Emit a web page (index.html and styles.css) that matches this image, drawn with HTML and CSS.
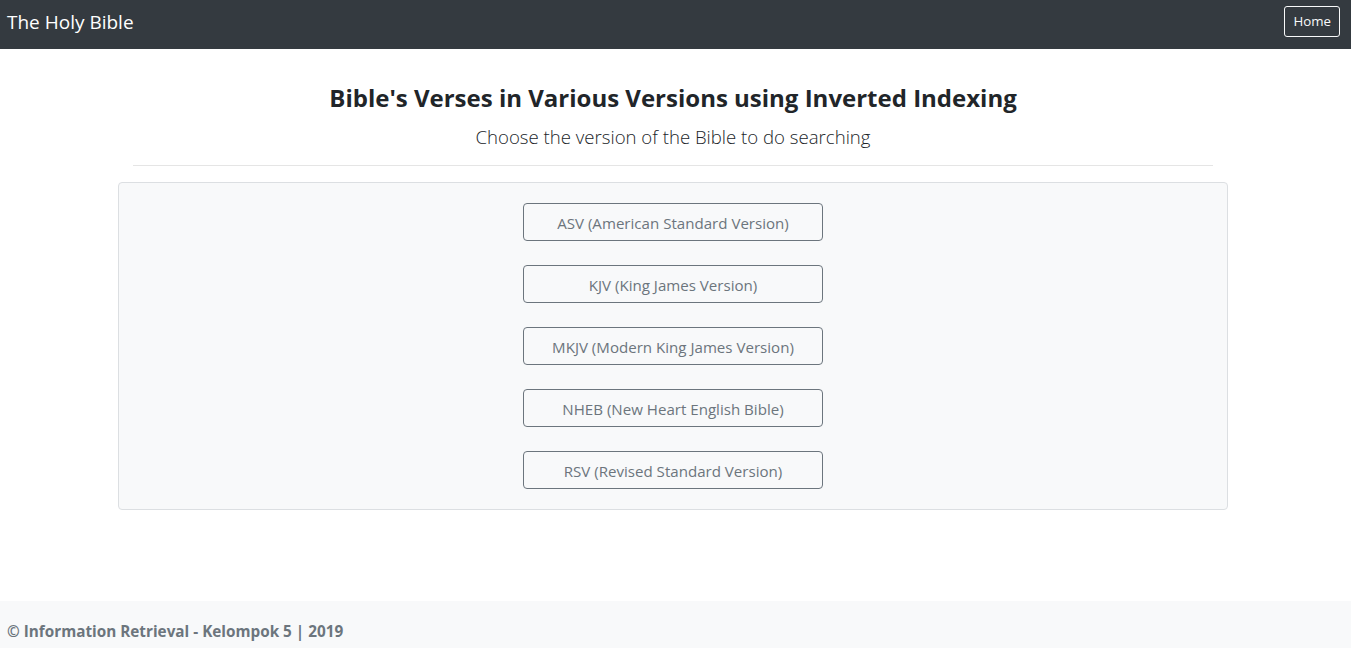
FILE: index.html
```html
<!DOCTYPE html>
<html lang="en">
<head>
<meta charset="utf-8">
<title>The Holy Bible</title>
<link rel="stylesheet" href="styles.css">
</head>
<body>
<nav class="navbar">
  <a class="brand" href="#">The Holy Bible</a>
  <a class="btn-home" href="#">Home</a>
</nav>
<main class="main">
  <div class="container">
    <h3 class="title">Bible's Verses in Various Versions using Inverted Indexing</h3>
    <p class="lead">Choose the version of the Bible to do searching</p>
    <hr class="divider">
    <div class="card">
      <a class="btn-version" href="#">ASV (American Standard Version)</a>
      <a class="btn-version" href="#">KJV (King James Version)</a>
      <a class="btn-version" href="#">MKJV (Modern King James Version)</a>
      <a class="btn-version" href="#">NHEB (New Heart English Bible)</a>
      <a class="btn-version" href="#">RSV (Revised Standard Version)</a>
    </div>
  </div>
</main>
<footer class="footer">
  <span class="footer-text">© Information Retrieval - Kelompok 5 | 2019</span>
</footer>
</body>
</html>
```

FILE: styles.css
```css
* { box-sizing: border-box; }
html, body { margin: 0; padding: 0; }
body {
  height: 648px;
  overflow: hidden;
  display: flex;
  flex-direction: column;
  font-family: "Open Sans", "Noto Sans", sans-serif;
  color: #212529;
  background: #fff;
  font-size: 16px;
}
.navbar {
  height: 49px;
  background: #343a40;
  display: flex;
  align-items: center;
  justify-content: space-between;
  padding: 6px 11px 12px 7px;
  flex-shrink: 0;
}
.brand {
  color: #fff;
  text-decoration: none;
  font-size: 19px;
  line-height: 30px;
  padding-top: 1px;
}
.btn-home {
  color: #f8f9fa;
  text-decoration: none;
  font-size: 13.3px;
  line-height: 21px;
  padding: 4px 8px;
  border: 1px solid #f8f9fa;
  border-radius: 3px;
}
.main {
  padding-top: 34px;
  padding-right: 5px;
}
.container {
  width: 1110px;
  margin: 0 auto;
  display: flex;
  flex-direction: column;
  align-items: center;
}
.title {
  margin: 0 0 8px;
  font-size: 24px;
  line-height: 29px;
  font-weight: 700;
  text-align: center;
}
.lead {
  margin: 2px 0 0;
  font-size: 18.6px;
  line-height: 30px;
  font-weight: 300;
  text-align: center;
}
.divider {
  width: 1080px;
  margin: 13px 0 16px;
  border: 0;
  border-top: 1px solid #e5e5e5;
}
.card {
  width: 1110px;
  background: #f8f9fa;
  border: 1px solid #dcdfe2;
  border-radius: 4px;
  padding: 20px 0;
  display: flex;
  flex-direction: column;
  align-items: center;
  gap: 24px;
}
.btn-version {
  width: 300px;
  height: 38px;
  display: flex;
  align-items: center;
  justify-content: center;
  padding-top: 2px;
  border: 1px solid #6c757d;
  border-radius: 4px;
  color: #6c757d;
  text-decoration: none;
  font-size: 15.1px;
}
.footer {
  margin-top: auto;
  height: 47px;
  background: #f8f9fa;
  padding: 18px 7px 5px;
  flex-shrink: 0;
}
.footer-text {
  color: #6c757d;
  font-weight: 700;
  font-size: 15.3px;
  line-height: 24px;
}
```
